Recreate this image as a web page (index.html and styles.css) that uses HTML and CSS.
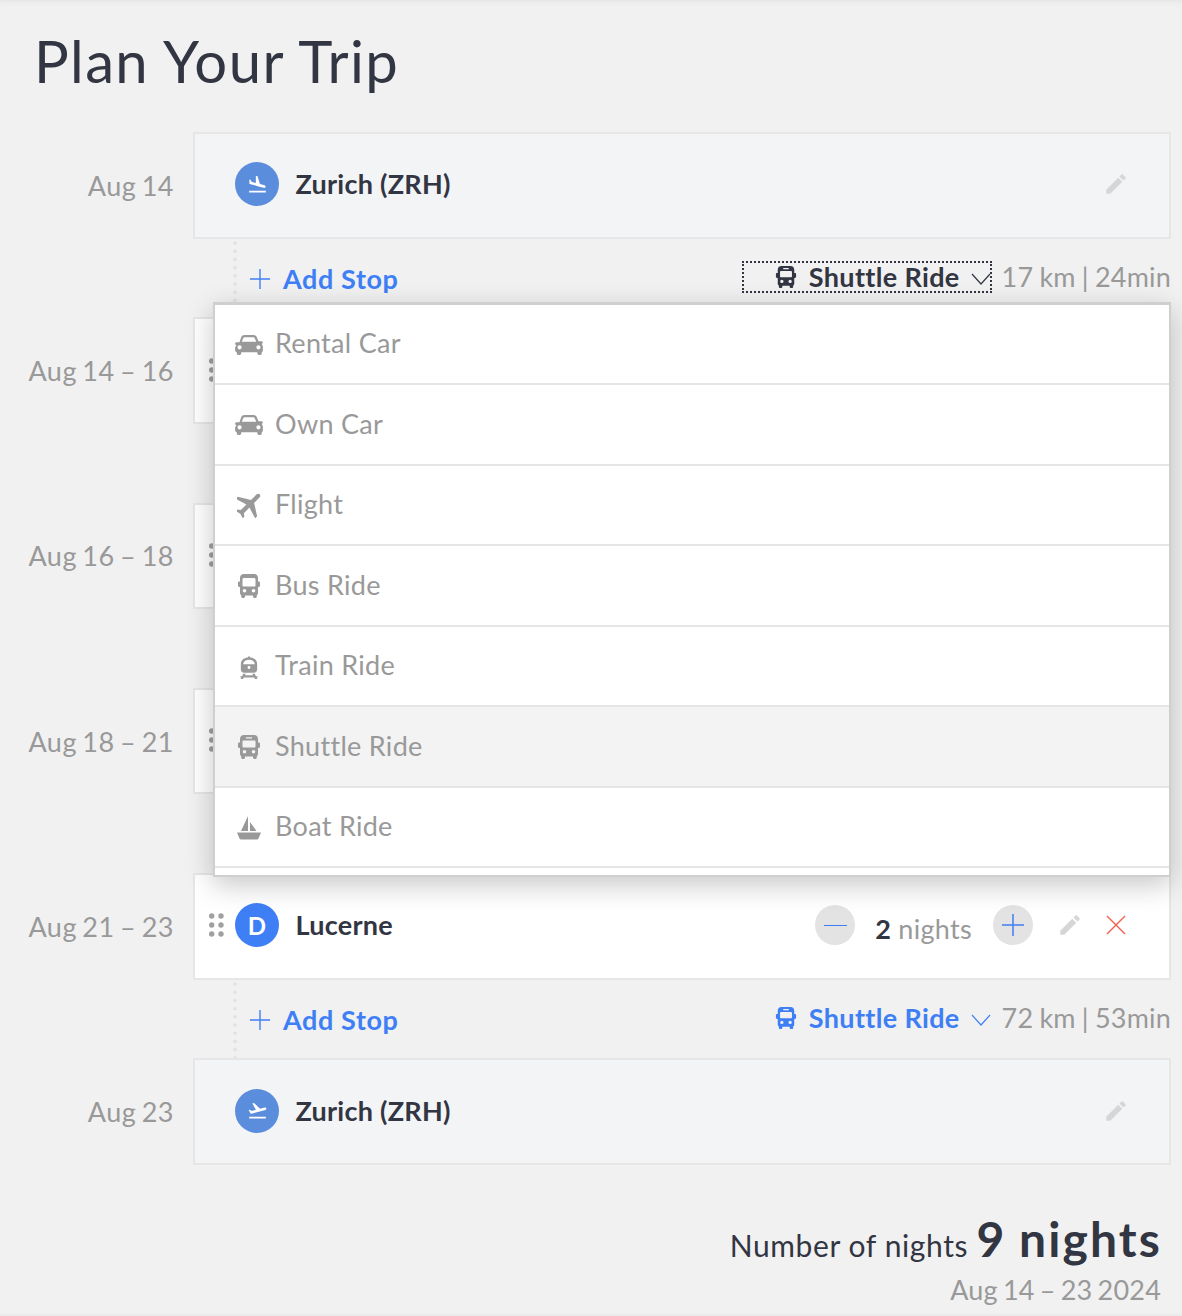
FILE: index.html
```html
<!DOCTYPE html>
<html lang="en">
<head>
  <meta charset="UTF-8">
  <title>Plan Your Trip</title>
  <link rel="stylesheet" href="styles.css">
</head>
<body>
  <svg class="icon-defs" width="0" height="0">
    <defs>
      <symbol id="i-car" viewBox="1 1 25 18">
        <path fill-rule="evenodd" d="M9.5 1h8c1.400 0 2.500.7 3 2l1.600 3.600H24.500c.8 0 1.500.5 1.500 1.200s-.6 1.100-1.300 1.100c.8.900 1.300 1.800 1.300 3v3c0 .8-.5 1.300-1 1.500V17.500c0 .9-.6 1.500-1.500 1.500h-1c-.9 0-1.500-.6-1.500-1.500V16.500H6.500v1c0 .9-.6 1.500-1.500 1.500H4c-.9 0-1.500-.6-1.500-1.500V16.400c-.6-.2-1.500-.7-1.500-1.500v-2c0-1.200.5-2.100 1.300-3-.7 0-1.300-.4-1.300-1.100s.7-1.200 1.500-1.200h2.400L6.500 3c.5-1.300 1.600-2 3-2zM9.600 3c-.7 0-1.100.3-1.300.9L7 7h13l-1.300-3.100C18.500 3.300 18.100 3 17.400 3zM5 10.200a1.900 1.900 0 1 0 0 3.800a1.900 1.900 0 1 0 0-3.800zM22 10.200a1.900 1.900 0 1 0 0 3.800a1.900 1.900 0 1 0 0-3.800z"/>
      </symbol>
      <symbol id="i-flight" viewBox="3 3 18 18">
        <path transform="rotate(45 12 12)" d="M21 16v-2l-8-5V3.500c0-.83-.67-1.500-1.500-1.500S10 2.670 10 3.500V9l-8 5v2l8-2.500V19l-2 1.500V22l3.500-1 3.500 1v-1.500L13 19v-5.500l8 2.500z"/>
      </symbol>
      <symbol id="i-bus" viewBox="0 0 24 26">
        <path fill-rule="evenodd" d="M7 1h10c2.400 0 4 1.600 4 4v3.500h.8c.7 0 1.200.5 1.200 1.200v3.100c0 .7-.5 1.200-1.200 1.200H21V20c0 1.100-.5 1.800-1.200 2.200v1.300c0 .8-.6 1.500-1.500 1.500h-.8c-.8 0-1.500-.7-1.500-1.500v-1H8v1c0 .8-.7 1.500-1.500 1.500h-.8c-.9 0-1.500-.7-1.500-1.500v-1.300C3.500 21.800 3 21.100 3 20v-6H2.200C1.500 14 1 13.500 1 12.800V9.700c0-.7.500-1.200 1.200-1.200H3V5c0-2.400 1.600-4 4-4zM7 5c-.9 0-1.500.6-1.500 1.500v6c0 .5.400.9.900.9h11.200c.5 0 .9-.4.900-.9v-6C18.500 5.600 17.900 5 17 5zM7.500 16a1.800 1.800 0 1 0 0 3.600a1.800 1.800 0 1 0 0-3.600zM16.500 16a1.800 1.800 0 1 0 0 3.600a1.800 1.800 0 1 0 0-3.600z"/>
      </symbol>
      <symbol id="i-shuttle" viewBox="0 0 24 26">
        <path fill-rule="evenodd" d="M7 1h10c2.400 0 4 1.600 4 4v3.500h.8c.7 0 1.200.5 1.200 1.200v3.100c0 .7-.5 1.200-1.200 1.200H21V20c0 1.100-.5 1.800-1.200 2.200v1.300c0 .8-.6 1.500-1.500 1.500h-.8c-.8 0-1.500-.7-1.500-1.500v-1H8v1c0 .8-.7 1.500-1.500 1.500h-.8c-.9 0-1.500-.7-1.500-1.500v-1.300C3.500 21.800 3 21.100 3 20v-6H2.200C1.500 14 1 13.500 1 12.800V9.700c0-.7.500-1.200 1.200-1.200H3V5c0-2.400 1.600-4 4-4zM9.500 3.200c-.4 0-.7.300-.7.700s.3.700.7.700h5c.4 0 .7-.3.700-.7s-.3-.7-.7-.7zM6.500 6.500c-.6 0-1 .4-1 1v5c0 .5.400.9.900.9h11.200c.5 0 .9-.4.900-.9v-5c0-.6-.4-1-1-1zM7.500 16a1.800 1.800 0 1 0 0 3.600a1.800 1.800 0 1 0 0-3.600zM16.500 16a1.800 1.800 0 1 0 0 3.600a1.800 1.800 0 1 0 0-3.600z"/>
      </symbol>
      <symbol id="i-train" viewBox="0 0 20 25">
        <path fill-rule="evenodd" d="M10 0l1.500 1.500C15.500 2 18.500 4.500 18.500 8.500V14c0 2-1.500 3.500-3.500 3.500H5C3 17.500 1.500 16 1.500 14V8.500C1.500 4.500 4.500 2 8.500 1.500zM10 4C7 4 4.500 5.500 3.800 8.500h12.400C15.500 5.500 13 4 10 4zM10 10.500a1.500 1.500 0 1 0 0 3a1.500 1.500 0 1 0 0-3z"/>
        <path d="M4 18.500h2.600L5.800 20h8.400l-.8-1.500H16l1.200 2.500H19v1.500h-1l.8 1.500H16.200l-.8-1.500H4.600L3.800 24H1.200L2 22.500H1V21h1.800z"/>
      </symbol>
      <symbol id="i-boat" viewBox="0 0 24 24">
        <path d="M11 0v15H4zM13 6l6.500 9H13zM0 16.500h24l-2.500 6c-.3.600-.8 1-1.500 1H4c-.7 0-1.200-.4-1.500-1z"/>
      </symbol>
      <symbol id="i-land" viewBox="0 0 24 24">
        <path d="M2.500 19h19v2h-19zm7.180-5.730l4.350 1.160 5.310 1.420c.8.210 1.620-.26 1.840-1.060.21-.8-.26-1.620-1.060-1.840l-5.310-1.420-2.760-9.020L10.120 2v8.280L5.150 8.950l-.93-2.320-1.450-.39v5.170l1.600.43 5.310 1.430z"/>
      </symbol>
      <symbol id="i-takeoff" viewBox="0 0 24 24">
        <path d="M2.500 19h19v2h-19zm19.570-9.360c-.21-.8-1.040-1.280-1.840-1.060L14.920 10l-6.900-6.430-1.930.51 4.140 7.170-4.970 1.330-1.970-1.540-1.450.39 1.820 3.160.77 1.330 1.600-.43 5.310-1.420 4.350-1.160L21 11.490c.81-.23 1.280-1.050 1.070-1.850z"/>
      </symbol>
      <symbol id="i-pencil" viewBox="0 0 24 24">
        <path d="M3 17.250V21h3.750L17.810 9.940l-3.750-3.750L3 17.250zM20.710 7.040c.39-.39.39-1.020 0-1.410l-2.340-2.340c-.39-.39-1.020-.39-1.410 0l-1.830 1.830 3.750 3.750 1.830-1.830z"/>
      </symbol>
      <symbol id="i-plus" viewBox="0 0 24 24">
        <path d="M12 1v22M1 12h22" fill="none" stroke="currentColor" stroke-width="1.500"/>
      </symbol>
      <symbol id="i-chevron" viewBox="0 0 20 12">
        <path d="M1 1l9 10 9-10" fill="none" stroke="currentColor" stroke-width="1.200"/>
      </symbol>
      <symbol id="i-grip" viewBox="0 0 15 24">
        <circle cx="2.700" cy="3" r="2.700"/><circle cx="12" cy="3" r="2.700"/>
        <circle cx="2.700" cy="12" r="2.700"/><circle cx="12" cy="12" r="2.700"/>
        <circle cx="2.700" cy="21" r="2.700"/><circle cx="12" cy="21" r="2.700"/>
      </symbol>
    </defs>
  </svg>

  <div class="page">
    <h1 class="page-title">Plan Your Trip</h1>

    <div class="timeline">
      <div class="stop">
        <div class="stop-date">Aug 14</div>
        <div class="stop-card airport">
          <span class="badge badge-airport"><svg class="badge-icon"><use href="#i-land"/></svg></span>
          <span class="stop-name">Zurich (ZRH)</span>
          <svg class="edit-icon airport-edit"><use href="#i-pencil"/></svg>
        </div>
      </div>

      <div class="leg">
        <span class="leg-line"></span>
        <a class="add-stop"><svg class="plus-icon"><use href="#i-plus"/></svg>Add Stop</a>
        <div class="leg-right">
          <button class="mode-select is-open">
            <svg class="mode-icon"><use href="#i-shuttle"/></svg>
            <span>Shuttle Ride</span>
            <svg class="chevron"><use href="#i-chevron"/></svg>
          </button>
          <span class="leg-info">17 km | 24min</span>
        </div>

        <ul class="mode-menu">
          <li class="mode-item"><svg class="item-icon car"><use href="#i-car"/></svg>Rental Car</li>
          <li class="mode-item"><svg class="item-icon car"><use href="#i-car"/></svg>Own Car</li>
          <li class="mode-item"><svg class="item-icon flight"><use href="#i-flight"/></svg>Flight</li>
          <li class="mode-item"><svg class="item-icon bus"><use href="#i-bus"/></svg>Bus Ride</li>
          <li class="mode-item"><svg class="item-icon train"><use href="#i-train"/></svg>Train Ride</li>
          <li class="mode-item selected"><svg class="item-icon bus"><use href="#i-shuttle"/></svg>Shuttle Ride</li>
          <li class="mode-item"><svg class="item-icon boat"><use href="#i-boat"/></svg>Boat Ride</li>
        </ul>
      </div>

      <div class="stop">
        <div class="stop-date">Aug 14 – 16</div>
        <div class="stop-card"><svg class="grip"><use href="#i-grip"/></svg></div>
      </div>
      <div class="leg"></div>

      <div class="stop">
        <div class="stop-date">Aug 16 – 18</div>
        <div class="stop-card"><svg class="grip"><use href="#i-grip"/></svg></div>
      </div>
      <div class="leg"></div>

      <div class="stop">
        <div class="stop-date">Aug 18 – 21</div>
        <div class="stop-card"><svg class="grip"><use href="#i-grip"/></svg></div>
      </div>
      <div class="leg"></div>

      <div class="stop">
        <div class="stop-date">Aug 21 – 23</div>
        <div class="stop-card">
          <svg class="grip"><use href="#i-grip"/></svg>
          <span class="badge">D</span>
          <span class="stop-name">Lucerne</span>
          <div class="stop-actions">
            <span class="round-btn"><span class="minus-bar"></span></span>
            <span class="nights"><b>2</b> nights</span>
            <span class="round-btn"><svg class="round-plus"><use href="#i-plus"/></svg></span>
            <svg class="edit-icon"><use href="#i-pencil"/></svg>
            <svg class="remove-icon" viewBox="0 0 20 20"><path d="M1 1l18 18M19 1L1 19" fill="none" stroke="currentColor" stroke-width="1.400"/></svg>
          </div>
        </div>
      </div>

      <div class="leg">
        <span class="leg-line"></span>
        <a class="add-stop"><svg class="plus-icon"><use href="#i-plus"/></svg>Add Stop</a>
        <div class="leg-right">
          <button class="mode-select">
            <svg class="mode-icon"><use href="#i-shuttle"/></svg>
            <span>Shuttle Ride</span>
            <svg class="chevron"><use href="#i-chevron"/></svg>
          </button>
          <span class="leg-info">72 km | 53min</span>
        </div>
      </div>

      <div class="stop">
        <div class="stop-date">Aug 23</div>
        <div class="stop-card airport">
          <span class="badge badge-airport"><svg class="badge-icon"><use href="#i-takeoff"/></svg></span>
          <span class="stop-name">Zurich (ZRH)</span>
          <svg class="edit-icon airport-edit"><use href="#i-pencil"/></svg>
        </div>
      </div>
    </div>

    <div class="summary">
      <div class="summary-line">Number of nights <strong>9 nights</strong></div>
      <div class="summary-dates">Aug 14 – 23 2024</div>
    </div>
  </div>
</body>
</html>
```

FILE: styles.css
```css
* {
  box-sizing: border-box;
  margin: 0;
  padding: 0;
}

body {
  font-family: 'Lato', 'Noto Sans', Arial, sans-serif;
  background-color: #f1f1f1;
  color: #323542;
}

.icon-defs {
  position: absolute;
}

.page {
  height: 1316px;
  padding: 0 11px 0 0;
  overflow: hidden;
  box-shadow: inset 0 8px 8px -8px rgba(0, 0, 0, 0.08), inset 0 -4px 4px -4px rgba(0, 0, 0, 0.08);
}

.page-title {
  font-size: 58px;
  font-weight: 400;
  line-height: 70px;
  letter-spacing: 1.4px;
  padding: 26px 0 36px 34px;
}

.stop {
  display: grid;
  grid-template-columns: 174px 1fr;
  column-gap: 19px;
  align-items: center;
  height: 106.500px;
}

.stop-date {
  text-align: right;
  color: #999;
  font-size: 27px;
  letter-spacing: 0.5px;
  word-spacing: -2px;
}

.stop-card {
  height: 106.500px;
  display: flex;
  align-items: center;
  padding: 0 0 2px 14px;
  background-color: #fff;
  border: 2px solid #e6e6e6;
  position: relative;
}

.stop-card.airport {
  background-color: #f3f4f6;
  padding-left: 40px;
}

.grip {
  width: 15px;
  height: 24px;
  fill: #a0a0a0;
  margin-right: 11px;
  flex-shrink: 0;
}

.badge {
  width: 44px;
  height: 44px;
  border-radius: 50%;
  background-color: #3f7ff5;
  color: #fff;
  font-size: 24px;
  font-weight: 700;
  display: flex;
  justify-content: center;
  align-items: center;
  flex-shrink: 0;
}

.badge-airport {
  background-color: #5b8ddd;
}

.badge-icon {
  width: 21px;
  height: 21px;
  fill: #fff;
}

.stop-name {
  font-size: 27px;
  font-weight: 700;
  margin-left: 16.500px;
  padding-bottom: 1px;
  letter-spacing: 0.25px;
}

.edit-icon {
  width: 26px;
  height: 26px;
  fill: #d6d6d6;
  flex-shrink: 0;
}

.airport-edit {
  margin-left: auto;
  margin-right: 40px;
}

.stop-actions {
  margin-left: auto;
  display: flex;
  align-items: center;
  padding-right: 43px;
}

.round-btn {
  width: 40px;
  height: 40px;
  border-radius: 50%;
  background-color: #e3e3e3;
  display: flex;
  justify-content: center;
  align-items: center;
}

.minus-bar {
  width: 23px;
  height: 1.5px;
  background-color: #3f7ff5;
}

.round-plus {
  width: 24px;
  height: 24px;
  color: #3f7ff5;
}

.nights {
  font-size: 27px;
  color: #999;
  margin: 0 21px 0 20px;
  padding-top: 6px;
  letter-spacing: 0.3px;
}

.nights b {
  color: #323542;
}

.stop-actions .edit-icon {
  margin-left: 24px;
}

.remove-icon {
  width: 20px;
  height: 20px;
  margin-left: 23px;
  color: #f0604f;
}

.leg {
  height: 78.800px;
  margin-left: 193px;
  display: flex;
  align-items: flex-start;
  position: relative;
}

.leg-line {
  align-self: stretch;
  width: 4px;
  margin-left: 40px;
  background-image: radial-gradient(circle, #e2e2e2 1.6px, transparent 2px);
  background-size: 4px 8.200px;
  background-repeat: repeat-y;
}

.add-stop {
  display: flex;
  align-items: center;
  margin-left: 12px;
  margin-top: 23.500px;
  color: #3f7ff5;
  font-size: 27px;
  font-weight: 700;
  letter-spacing: 0.6px;
}

.plus-icon {
  width: 22px;
  height: 22px;
  margin-right: 12px;
  color: #3f7ff5;
}

.leg-right {
  margin-left: auto;
  margin-top: 21.500px;
  display: flex;
  align-items: center;
}

.mode-select {
  display: flex;
  align-items: center;
  height: 32px;
  padding: 0 1px 0 33px;
  background: none;
  border: none;
  font-family: inherit;
  font-size: 27px;
  font-weight: 700;
  letter-spacing: 0.35px;
  color: #3f7ff5;
}

.mode-select.is-open {
  color: #323542;
  outline: 2px dotted #323542;
  outline-offset: -2px;
}

.mode-icon {
  width: 22px;
  height: 24px;
  fill: currentColor;
  margin-right: 12px;
}

.chevron {
  width: 20px;
  height: 12px;
  margin-left: 11px;
  margin-top: 4px;
}

.leg-info {
  font-size: 27px;
  color: #999;
  margin-left: 10px;
  letter-spacing: 0.2px;
  word-spacing: -1px;
}

.mode-menu {
  position: absolute;
  z-index: 5;
  top: 63px;
  left: 20px;
  right: 0;
  height: 575px;
  list-style: none;
  background-color: #fff;
  border: 2px solid #cfcfcf;
  border-top-width: 3px;
  box-shadow: 0 8px 26px rgba(0, 0, 0, 0.22);
}

.mode-item {
  height: 80.500px;
  display: flex;
  align-items: center;
  padding: 0 0 2px 20px;
  font-size: 27px;
  color: #999;
  letter-spacing: 0.3px;
  border-bottom: 2px solid #e5e5e5;
}

.mode-item.selected {
  background-color: #f3f3f3;
}

.item-icon {
  width: 28px;
  height: 26px;
  fill: #999;
  margin-right: 12px;
  margin-top: 3px;
  flex-shrink: 0;
}

.item-icon.car {
  height: 20px;
  margin-top: 4px;
}

.item-icon.flight {
  width: 26px;
  margin-left: 2px;
}

.item-icon.bus {
  height: 26px;
  margin-top: 4px;
}

.item-icon.train {
  height: 24px;
  margin-top: 6px;
}

.item-icon.boat {
  height: 24px;
  margin-top: 4px;
}

.summary {
  text-align: right;
  padding: 45px 10px 0 0;
}

.summary-line {
  font-size: 30px;
  line-height: 58px;
  letter-spacing: 0.6px;
}

.summary-line strong {
  font-size: 48px;
  letter-spacing: 2.100px;
  word-spacing: -1px;
  margin-right: -1px;
}

.summary-dates {
  font-size: 27px;
  color: #999;
  line-height: 32px;
  letter-spacing: 0.2px;
  word-spacing: -2px;
}
```
